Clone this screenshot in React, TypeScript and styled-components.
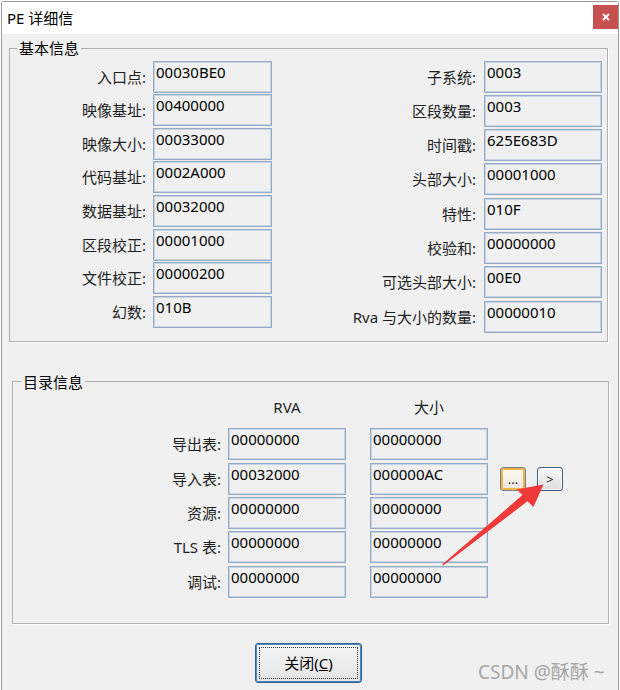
import React from "react";
import styled, { createGlobalStyle } from "styled-components";

const GlobalStyle = createGlobalStyle`
  html, body { margin: 0; padding: 0; background: #ffffff; }
  body {
    font-family: "Noto Sans", "Noto Sans CJK SC", sans-serif;
    font-size: 15px;
    color: #000;
  }
  * { box-sizing: border-box; }
`;

const Page = styled.div`
  position: relative;
  width: 620px;
  height: 690px;
  overflow: hidden;
  padding: 1px 0 0 1px;
`;

const Window = styled.div`
  width: 618px;
  height: 700px;
  border: 1px solid #9a9a9a;
  border-bottom: none;
  border-radius: 3px 3px 0 0;
  background: #f0f0f0;
  display: flex;
  flex-direction: column;
`;

const TitleBar = styled.div`
  height: 32px;
  flex-shrink: 0;
  background: #ffffff;
  display: flex;
  align-items: center;
  justify-content: space-between;
  padding-left: 5px;
`;

const Title = styled.span`
  font-size: 15px;
  line-height: 20px;
  color: #000;
`;

const CloseX = styled.div`
  align-self: flex-start;
  margin-top: 3px;
  width: 25px;
  height: 24px;
  background: #c75050;
  display: flex;
  align-items: center;
  justify-content: center;
`;

const Group = styled.fieldset<{
  $ml: number;
  $w: number;
  $mt: number;
  $pt: number;
  $pb: number;
}>`
  margin: ${(p) => p.$mt}px 0 0 ${(p) => p.$ml}px;
  width: ${(p) => p.$w}px;
  min-inline-size: 0;
  padding: ${(p) => p.$pt}px 0 ${(p) => p.$pb}px 0;
  border: 1px solid #b0b0b0;
  box-shadow: 1px 1px 0 #ffffff;
`;

const Legend = styled.legend<{ $ml: number }>`
  margin-left: ${(p) => p.$ml}px;
  padding: 0 2px;
  font-size: 15px;
  line-height: 20px;
  color: #000;
`;

const Columns = styled.div`
  display: flex;
  align-items: flex-start;
`;

const Column = styled.div<{ $gap: number }>`
  display: flex;
  flex-direction: column;
  gap: ${(p) => p.$gap}px;
`;

const Row = styled.div`
  display: flex;
  align-items: center;
`;

const Label = styled.div<{ $w: number }>`
  width: ${(p) => p.$w}px;
  flex-shrink: 0;
  text-align: right;
  font-size: 15px;
  line-height: 20px;
  color: #1e1e1e;
  white-space: nowrap;
`;

const Field = styled.div<{ $w: number; $ml: number }>`
  width: ${(p) => p.$w}px;
  height: 32px;
  margin-left: ${(p) => p.$ml}px;
  flex-shrink: 0;
  border: 1px solid #93abc6;
  box-shadow: inset 0 0 0 1px #c6d3e1;
  background: #f0f0f0;
  padding: 0 2px;
  font-size: 15px;
  line-height: 20px;
  color: #000;
  white-space: nowrap;
`;

const HeaderRow = styled.div`
  display: flex;
  height: 20px;
  margin-bottom: 11.6px;
`;

const HeaderCell = styled.div<{ $w: number; $ml: number }>`
  width: ${(p) => p.$w}px;
  margin-left: ${(p) => p.$ml}px;
  text-align: center;
  font-size: 15px;
  line-height: 20px;
  color: #1e1e1e;
`;

const SmallButton = styled.button<{ $hot?: boolean; $ml: number }>`
  width: 26px;
  height: 24px;
  margin-left: ${(p) => p.$ml}px;
  padding: 0;
  flex-shrink: 0;
  border: 1px solid ${(p) => (p.$hot ? "#6f7f96" : "#3d5b83")};
  border-radius: 3px;
  background: ${(p) =>
    p.$hot
      ? "linear-gradient(#fdfaf3, #ece6da)"
      : "linear-gradient(#f8f8f8, #dedede)"};
  box-shadow: ${(p) =>
    p.$hot ? "inset 0 0 0 2px #f0b446" : "inset 0 0 0 1px #fbfbfb"};
  font-family: "Noto Sans", sans-serif;
  font-size: 13px;
  line-height: 14px;
  color: #222;
  display: flex;
  align-items: ${(p) => (p.$hot ? "flex-end" : "center")};
  justify-content: center;
  padding-bottom: ${(p) => (p.$hot ? "4px" : "0")};
`;

const CloseButton = styled.button`
  position: relative;
  width: 107px;
  height: 40px;
  margin: 18.5px 0 0 253px;
  flex-shrink: 0;
  border: 1px solid #2d5f93;
  border-radius: 3px;
  box-shadow: inset 0 0 0 1px #4f8ac4;
  background: linear-gradient(#f6f6f6, #e4e4e4);
  font-family: "Noto Sans", "Noto Sans CJK SC", sans-serif;
  font-size: 15px;
  line-height: 20px;
  color: #000;
  padding: 0;

  &::after {
    content: "";
    position: absolute;
    inset: 3px;
    border: 1px dotted #333;
  }
`;

const Mnemonic = styled.span`
  text-decoration: underline;
`;

const Watermark = styled.div`
  position: absolute;
  left: 478px;
  top: 660px;
  font-family: "Noto Sans", "Noto Sans CJK SC", sans-serif;
  font-size: 19px;
  line-height: 24px;
  color: #a6a6a6;
  white-space: nowrap;
`;

const Overlay = styled.svg`
  position: absolute;
  left: 0;
  top: 0;
  pointer-events: none;
`;

const basic: [string, string][][] = [
  [
    ["入口点:", "00030BE0"],
    ["映像基址:", "00400000"],
    ["映像大小:", "00033000"],
    ["代码基址:", "0002A000"],
    ["数据基址:", "00032000"],
    ["区段校正:", "00001000"],
    ["文件校正:", "00000200"],
    ["幻数:", "010B"],
  ],
  [
    ["子系统:", "0003"],
    ["区段数量:", "0003"],
    ["时间戳:", "625E683D"],
    ["头部大小:", "00001000"],
    ["特性:", "010F"],
    ["校验和:", "00000000"],
    ["可选头部大小:", "00E0"],
    ["Rva 与大小的数量:", "00000010"],
  ],
];

const dirs: [string, string, string][] = [
  ["导出表:", "00000000", "00000000"],
  ["导入表:", "00032000", "000000AC"],
  ["资源:", "00000000", "00000000"],
  ["TLS 表:", "00000000", "00000000"],
  ["调试:", "00000000", "00000000"],
];

export default function App() {
  return (
    <>
      <GlobalStyle />
      <Page>
        <Window>
          <TitleBar>
            <Title>PE 详细信</Title>
            <CloseX>
              <svg width="8" height="8" viewBox="0 0 8 8">
                <path d="M1 1 L7 7 M7 1 L1 7" stroke="#fff" strokeWidth="1.8" />
              </svg>
            </CloseX>
          </TitleBar>

          <Group $ml={7} $w={599} $mt={4} $pt={2.5} $pb={8.6}>
            <Legend $ml={7}>基本信息</Legend>
            <Columns>
              <Column $gap={1.67}>
                {basic[0].map(([l, v]) => (
                  <Row key={l}>
                    <Label $w={136}>{l}</Label>
                    <Field $w={119} $ml={7}>{v}</Field>
                  </Row>
                ))}
              </Column>
              <Column $gap={2.34}>
                {basic[1].map(([l, v]) => (
                  <Row key={l}>
                    <Label $w={204}>{l}</Label>
                    <Field $w={118} $ml={8}>{v}</Field>
                  </Row>
                ))}
              </Column>
            </Columns>
          </Group>

          <Group $ml={10} $w={597} $mt={29.2} $pt={5} $pb={25.8}>
            <Legend $ml={8}>目录信息</Legend>
            <HeaderRow>
              <HeaderCell $w={118} $ml={215}>RVA</HeaderCell>
              <HeaderCell $w={118} $ml={24}>大小</HeaderCell>
            </HeaderRow>
            <Column $gap={2.35}>
              {dirs.map(([l, a, b], i) => (
                <Row key={l}>
                  <Label $w={208}>{l}</Label>
                  <Field $w={118} $ml={7}>{a}</Field>
                  <Field $w={118} $ml={24}>{b}</Field>
                  {i === 1 && (
                    <>
                      <SmallButton $hot $ml={12}>...</SmallButton>
                      <SmallButton $ml={11}>&gt;</SmallButton>
                    </>
                  )}
                </Row>
              ))}
            </Column>
          </Group>

          <CloseButton>
            关闭(<Mnemonic>C</Mnemonic>)
          </CloseButton>
        </Window>

        <Overlay width="620" height="690" viewBox="0 0 620 690">
          <polygon
            points="442.2,564.4 522.5,495.1 516.5,489.5 543.5,484.5 533.5,507 527.5,501.3 443.2,565.6"
            fill="#f03a3a"
          />
        </Overlay>
        <Watermark>CSDN @酥酥 ~</Watermark>
      </Page>
    </>
  );
}
